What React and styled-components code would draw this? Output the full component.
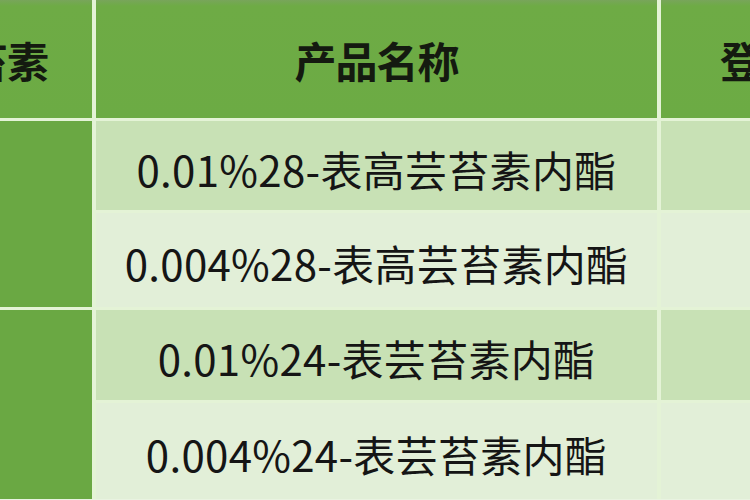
import React from 'react';
import styled, { createGlobalStyle } from 'styled-components';

const GlobalStyle = createGlobalStyle`
  html, body {
    margin: 0;
    padding: 0;
    width: 750px;
    height: 500px;
    overflow: hidden;
    background: #e9f3e1;
  }
`;

const Table = styled.div`
  display: grid;
  grid-template-columns: 92px 561px 100px;
  grid-template-rows: 118px 89px 94px 90px 96px;
  column-gap: 4px;
  row-gap: 3px;
  width: 761px;
  background: #e4f3d6;
  font-family: "Noto Sans CJK SC", "Noto Sans", sans-serif;
`;

const HeadCell = styled.div`
  display: flex;
  align-items: center;
  justify-content: ${p => p.align || 'center'};
  padding: ${p => p.pad || '0'};
  overflow: hidden;
  white-space: nowrap;
  background: linear-gradient(#78a55a 0px, #6eab45 6px, #6cab44 100%);
  color: #141a10;
  font-size: 42px;
  font-weight: 700;
  letter-spacing: -1px;
`;

const GroupCell = styled.div`
  grid-row: span 2;
  background: #6aa843;
`;

const Cell = styled.div`
  display: flex;
  align-items: center;
  justify-content: center;
  padding-top: 5px;
  white-space: nowrap;
  overflow: hidden;
  background: ${p => (p.tone === 'dark' ? '#c8e1b5' : '#e2efd8')};
  color: #151515;
  font-size: 42px;
  font-weight: 400;
  letter-spacing: 0.3px;
`;

const rows = [
  { name: '0.01%28-表高芸苔素内酯', tone: 'dark', group: true },
  { name: '0.004%28-表高芸苔素内酯', tone: 'light' },
  { name: '0.01%24-表芸苔素内酯', tone: 'dark', group: true },
  { name: '0.004%24-表芸苔素内酯', tone: 'light' },
];

export default function App() {
  return (
    <>
      <GlobalStyle />
      <Table>
        <HeadCell align="flex-end" pad="0 44px 0 0">芸苔素</HeadCell>
        <HeadCell>产品名称</HeadCell>
        <HeadCell align="flex-start" pad="0 0 0 59px">登记证号</HeadCell>
        {rows.map((r) => (
          <React.Fragment key={r.name}>
            {r.group && <GroupCell />}
            <Cell tone={r.tone}>{r.name}</Cell>
            <Cell tone={r.tone} />
          </React.Fragment>
        ))}
      </Table>
    </>
  );
}
